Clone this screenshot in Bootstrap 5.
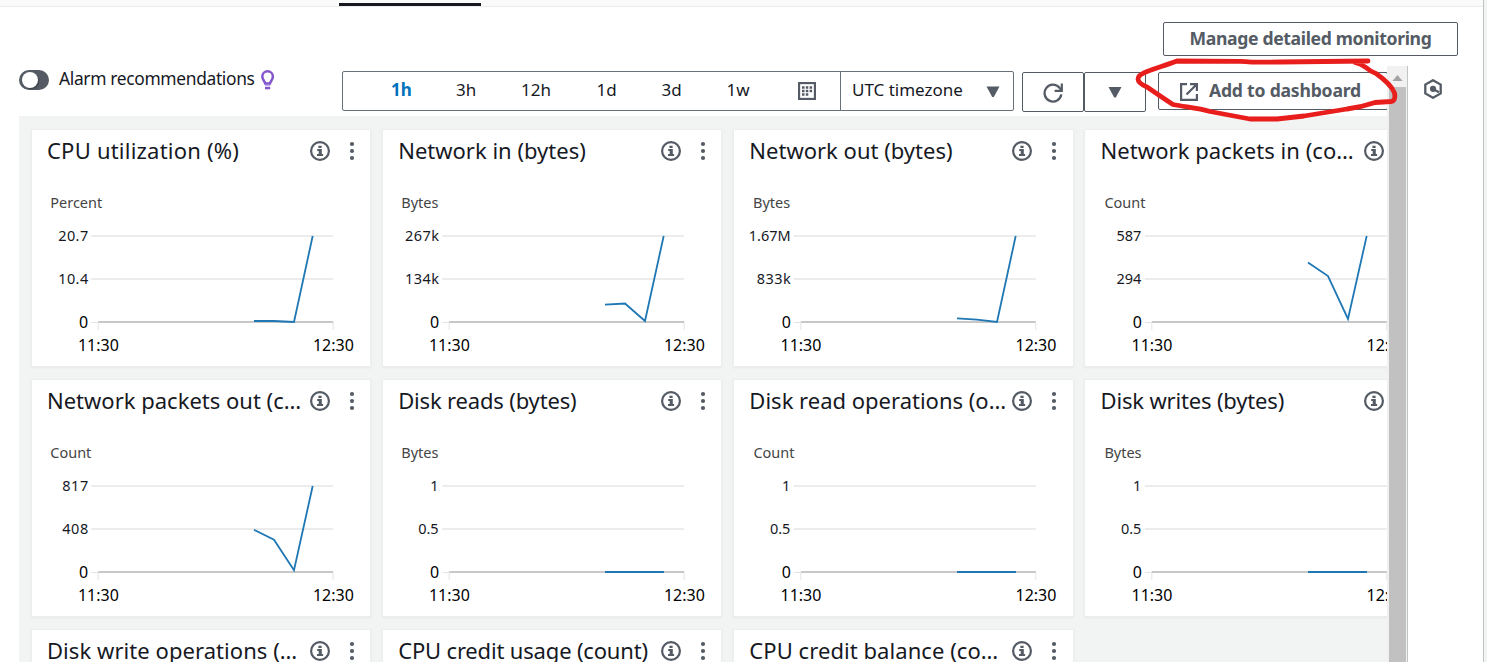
<!DOCTYPE html>
<html lang="en">
<head>
<meta charset="utf-8">
<meta name="viewport" content="width=device-width, initial-scale=1">
<title>Monitoring</title>
<link rel="stylesheet" href="https://cdn.jsdelivr.net/npm/bootstrap@5.3.0/dist/css/bootstrap.min.css">
<style>
  body { font-family: "Noto Sans", "Open Sans", sans-serif; color: #16191f; height: 662px; overflow: hidden; background: #f2f3f3; }
  .page { width: 1484px; height: 662px; border-right: 1px solid #bfc5c6; overflow: hidden; }
  .tabstrip { height: 7px; background: #fafafa; border-bottom: 1px solid #eaeded; padding: 3px 0 0 339px; }
  .tab-mark { width: 142px; height: 3px; background: #16191f; }
  .actions { height: 59px; padding: 15px 25px 0 0; }
  .btn-line { --bs-btn-color: #545b64; --bs-btn-border-color: #545b64; --bs-btn-border-radius: 2px; --bs-btn-font-weight: 700; --bs-btn-font-size: 17.6px; --bs-btn-line-height: 20px; --bs-btn-padding-x: 0; --bs-btn-padding-y: 0; background: #fff; white-space: nowrap; flex: none; }
  .btn-manage { width: 295px; height: 34px; letter-spacing: -.35px; padding-bottom: 3px; }
  .btn-add span { letter-spacing: -.22px; padding-bottom: 2px; }
  .pane { width: 1368px; margin-left: 19px; height: 596px; overflow: hidden; }
  .toolbar { height: 50px; width: 1368px; }
  .switch { width: 30px; height: 20px; border-radius: 10px; background: #545b64; padding: 2px 3px; margin-top: 4px; flex: none; }
  .knob { width: 16px; height: 16px; border-radius: 50%; background: #fff; box-shadow: 1px 1px 1px rgba(0,0,0,.3); }
  .alarm-label { font-size: 17.4px; letter-spacing: -.34px; line-height: 24px; margin: 0 0 0 10px; width: 196px; flex: none; white-space: nowrap; }
  .bulb { margin: 4px 0 0 4px; flex: none; }
  .range-box { margin: 5px 0 0 65px; height: 40px; width: 499px; flex: none; border: 1px solid #687078; border-radius: 2px 0 0 2px; padding-left: 48px; }
  .range-box span { font-size: 17px; line-height: 36px; flex: none; white-space: nowrap; width: 65px; }
  .range-box .wide { width: 75.5px; }
  .calendar { margin: 10px 24px 0 auto; }
  .zone-box { margin: 5px 0 0 -1px; height: 40px; width: 174px; flex: none; border: 1px solid #687078; border-radius: 0 2px 2px 0; font-size: 17px; line-height: 36px; padding-left: 11px; }
  .btn-refresh, .btn-caret { width: 62px; height: 40px; margin-top: 6px; }
  .btn-refresh { margin-left: 8px; }
  .btn-caret svg { display: block; margin: 0 auto; }
  .btn-add { width: 230px; height: 38px; margin: 6px 0 0 12px; }
  .active-range { color: #0073bb; font-weight: 700; }
  .board { background: #f2f3f3; width: 1420px; height: 546px; display: grid; grid-template-columns: repeat(4, 338.4px); grid-auto-rows: 236px; gap: 14px 12.8px; padding: 14px 0 0 12.8px; }
  .metric { --bs-card-border-width: 0; --bs-card-border-radius: 0; background: #fff; box-shadow: 0 0 0 1px #eceeee, 0 1px 2px 1px #e6e8e8; }
  .metric-head { height: 46px; padding: 4px 0 0 15.2px; flex: none; }
  .metric-title { width: 260px; font-size: 22px; line-height: 32px; white-space: nowrap; color: #16191f; }
  .snug { letter-spacing: -.17px; }
  .open-a { letter-spacing: .22px; }
  .open-b { letter-spacing: .06px; }
  .info-icon { width: 20px; height: 20px; margin: 7px 0 0 3px; flex: none; }
  .menu-icon { width: 6px; height: 20px; margin: 7px 0 0 19px; flex: none; }
  .chart { width: 338.4px; height: 190px; display: block; }
  .chart text { font-size: 14.5px; fill: #16191f; }
  .chart .unit { fill: #444; }
  .end { text-anchor: end; } .mid { text-anchor: middle; }
  .series { fill: none; stroke: #1f77b4; stroke-width: 1.8; }
  .scroller { width: 21px; height: 596px; border-right: 1px solid #bfc5c6; background: #f1f1f1; }
  .scroll-up { height: 21px; padding: 9px 0 0 5px; }
  .thumb { margin-left: 2px; width: 17px; height: 575px; background: #c1c1c1; }
  .side-icon { margin: 13px 0 0 15px; }
  .marker { left: 0; top: 0; pointer-events: none; }
</style>
</head>
<body>
<svg class="d-none" xmlns="http://www.w3.org/2000/svg">
  <symbol id="info" viewBox="0 0 20 20"><circle cx="10" cy="10" r="8.9" fill="none" stroke="#545b64" stroke-width="2.200"/><path d="M8.4 4.700h3.200v2.300H8.400zM7.200 8.100h4.600v5h1.300v2H7v-2h1.700v-3.100H7.200z" fill="#545b64"/></symbol>
  <symbol id="dots" viewBox="0 0 6 20"><g fill="#545b64"><circle cx="3" cy="3" r="2.100"/><circle cx="3" cy="10" r="2.100"/><circle cx="3" cy="17" r="2.100"/></g></symbol>
  <g id="axes"><path d="M59.200 106h242M59.200 149h242" stroke="#ececec" stroke-width="2"/><path d="M59.200 192.500h7M66.200 193v7M301.200 193v7" stroke="#e4e4e4"/><path d="M66.200 192h235" stroke="#c8c8c8" stroke-width="2"/><text class="end" x="56.2" y="198">0</text><text class="mid" x="66.4" y="221">11:30</text><text class="mid" x="301.4" y="221">12:30</text></g>
</svg>

<div class="page bg-white">
  <div class="tabstrip"><div class="tab-mark"></div></div>
  <div class="actions d-flex justify-content-end"><button class="btn btn-line btn-manage">Manage detailed monitoring</button></div>
  <div class="d-flex">
    <main class="pane flex-shrink-0">
      <div class="toolbar d-flex align-items-start">
        <div class="switch"><div class="knob"></div></div>
        <div class="alarm-label">Alarm recommendations</div>
        <svg class="bulb" width="18" height="20" viewBox="0 0 18 20"><path d="M6.200 13.400C6 11.700 3.300 10 3.300 6.600a5.300 5.300 0 0 1 10.600 0c0 3.400-2.700 5.100-2.900 6.800z" fill="none" stroke="#8456ce" stroke-width="2.500"/><path d="M6 15h5.200v1.400H6z" fill="#bda4e6"/><path d="M6 17h5.200v2.300H6z" fill="#8456ce"/></svg>
        <div class="range-box d-flex">
          <span class="active-range">1h</span><span>3h</span><span class="wide">12h</span><span>1d</span><span>3d</span><span class="w-auto">1w</span>
          <svg class="calendar" width="18" height="18" viewBox="0 0 18 18"><rect x="1" y="1" width="16" height="16" fill="none" stroke="#545b64" stroke-width="2.300"/><path d="M4 5.500h10.500M4 9h10.500M4 12.500h7" stroke="#545b64" stroke-width="2.300" stroke-dasharray="2.500 1.300"/></svg>
        </div>
        <div class="zone-box d-flex"><span>UTC timezone</span><svg style="margin:14px 0 0 auto" class="me-2" width="24" height="12"><path d="M5.500 .500h13L12.800 11h-1.600z" fill="#545b64"/></svg></div>
        <button class="btn btn-line btn-refresh"><svg width="20" height="20" viewBox="0 0 20 20"><path d="M18.300 11.300A8.400 8.400 0 1 1 16.500 4.800L18.500 7" fill="none" stroke="#545b64" stroke-width="2.300"/><path d="M18.800 .500v7.300h-7.200" fill="none" stroke="#545b64" stroke-width="2.200"/></svg></button>
        <button class="btn btn-line btn-caret"><svg width="14" height="11"><path d="M.500 0h13L7.800 10.500H6.200z" fill="#545b64"/></svg></button>
        <button class="btn btn-line btn-add d-flex align-items-center"><svg style="margin:2px 11px 0 21px" width="18" height="18" viewBox="0 0 18 18" fill="none" stroke="#545b64" stroke-width="2.200"><path d="M7 1.100H1.100v15.800h15.800V11M10 1.100h6.900V8M16.500 1.500L6.500 11.500"/></svg><span>Add to dashboard</span></button>
      </div>

      <div class="board">
        <section class="card metric"><div class="metric-head d-flex"><h2 class="metric-title open-a m-0 fw-normal">CPU utilization (%)</h2><svg class="info-icon"><use href="#info"/></svg><svg class="menu-icon"><use href="#dots"/></svg></div>
          <svg class="chart" viewBox="0 46 338.4 190"><use href="#axes"/><text class="unit" x="18.3" y="78">Percent</text><text class="end" x="56.2" y="111" textLength="30">20.7</text><text class="end" x="56.2" y="154" textLength="30">10.4</text><path class="series" d="M222 191h20l20 1 18.700-86"/></svg></section>
        <section class="card metric"><div class="metric-head d-flex"><h2 class="metric-title m-0 fw-normal">Network in (bytes)</h2><svg class="info-icon"><use href="#info"/></svg><svg class="menu-icon"><use href="#dots"/></svg></div>
          <svg class="chart" viewBox="0 46 338.4 190"><use href="#axes"/><text class="unit" x="18.3" y="78">Bytes</text><text class="end" x="56" y="111" textLength="34">267k</text><text class="end" x="56" y="154" textLength="34">134k</text><path class="series" d="M222 174.700l20-1.200 20 17.500 18.700-85"/></svg></section>
        <section class="card metric"><div class="metric-head d-flex"><h2 class="metric-title m-0 fw-normal">Network out (bytes)</h2><svg class="info-icon"><use href="#info"/></svg><svg class="menu-icon"><use href="#dots"/></svg></div>
          <svg class="chart" viewBox="0 46 338.4 190"><use href="#axes" x=".6"/><text class="unit" x="19" y="78">Bytes</text><text class="end" x="56.7" y="111">1.67M</text><text class="end" x="56.7" y="154" textLength="34">833k</text><path class="series" d="M223 188.400l20 1.300 20 2.300 18.700-86"/></svg></section>
        <section class="card metric"><div class="metric-head d-flex"><h2 class="metric-title open-b m-0 fw-normal">Network packets in (co…</h2><svg class="info-icon"><use href="#info"/></svg></div>
          <svg class="chart" viewBox="0 46 338.4 190"><use href="#axes" x=".6"/><text class="unit" x="19.4" y="78">Count</text><text class="end" x="56.4" y="111">587</text><text class="end" x="56.4" y="154">294</text><path class="series" d="M223 132.500l20 13.500 20 43 18.700-83"/></svg></section>

        <section class="card metric"><div class="metric-head d-flex"><h2 class="metric-title m-0 fw-normal">Network packets out (c…</h2><svg class="info-icon"><use href="#info"/></svg><svg class="menu-icon"><use href="#dots"/></svg></div>
          <svg class="chart" viewBox="0 46 338.4 190"><use href="#axes"/><text class="unit" x="18.3" y="78">Count</text><text class="end" x="56.2" y="111" textLength="26">817</text><text class="end" x="56.2" y="154" textLength="26">408</text><path class="series" d="M222 149.700l20 10 20 30.500 18.700-84.200"/></svg></section>
        <section class="card metric"><div class="metric-head d-flex"><h2 class="metric-title snug m-0 fw-normal">Disk reads (bytes)</h2><svg class="info-icon"><use href="#info"/></svg><svg class="menu-icon"><use href="#dots"/></svg></div>
          <svg class="chart" viewBox="0 46 338.4 190"><use href="#axes"/><text class="unit" x="18.3" y="78">Bytes</text><text class="end" x="55.5" y="111">1</text><text class="end" x="55.6" y="154">0.5</text><path class="series" d="M222 192h59"/></svg></section>
        <section class="card metric"><div class="metric-head d-flex"><h2 class="metric-title m-0 fw-normal">Disk read operations (o…</h2><svg class="info-icon"><use href="#info"/></svg><svg class="menu-icon"><use href="#dots"/></svg></div>
          <svg class="chart" viewBox="0 46 338.4 190"><use href="#axes" x=".6"/><text class="unit" x="19.4" y="78">Count</text><text class="end" x="56.4" y="111">1</text><text class="end" x="56.4" y="154">0.5</text><path class="series" d="M223 192h59"/></svg></section>
        <section class="card metric"><div class="metric-head d-flex"><h2 class="metric-title snug m-0 fw-normal">Disk writes (bytes)</h2><svg class="info-icon"><use href="#info"/></svg></div>
          <svg class="chart" viewBox="0 46 338.4 190"><use href="#axes" x=".6"/><text class="unit" x="19.4" y="78">Bytes</text><text class="end" x="56.4" y="111">1</text><text class="end" x="56.4" y="154">0.5</text><path class="series" d="M223 192h59"/></svg></section>

        <section class="card metric"><div class="metric-head d-flex"><h2 class="metric-title open-b m-0 fw-normal">Disk write operations (…</h2><svg class="info-icon"><use href="#info"/></svg><svg class="menu-icon"><use href="#dots"/></svg></div></section>
        <section class="card metric"><div class="metric-head d-flex"><h2 class="metric-title snug m-0 fw-normal">CPU credit usage (count)</h2><svg class="info-icon"><use href="#info"/></svg><svg class="menu-icon"><use href="#dots"/></svg></div></section>
        <section class="card metric"><div class="metric-head d-flex"><h2 class="metric-title open-b m-0 fw-normal">CPU credit balance (co…</h2><svg class="info-icon"><use href="#info"/></svg><svg class="menu-icon"><use href="#dots"/></svg></div></section>
      </div>
    </main>
    <div class="scroller flex-shrink-0"><div class="scroll-up d-flex"><svg width="11" height="6"><path d="M5.500 0L10.500 6H.500z" fill="#a3a3a3"/></svg></div><div class="thumb"></div></div>
    <svg class="side-icon" width="20" height="20" viewBox="0 0 20 20"><path d="M10 1.200l7.700 4.400v8.800L10 18.800l-7.700-4.400V5.600z" fill="none" stroke="#545b64" stroke-width="2.300"/><circle cx="10" cy="9.800" r="3.100" fill="#545b64"/><path d="M10 10l6 3.300" stroke="#545b64" stroke-width="2.300"/></svg>
  </div>
</div>

<!-- hand-drawn highlight around the "Add to dashboard" button -->
<svg class="marker position-absolute" width="1487" height="662"><path d="M1368 61L1280 62Q1255 62.500 1240 61.300L1177 61C1164 66 1155 68 1147 71.500C1135 76 1135 82 1147 87Q1163 98 1173 104.500C1185 107 1198 108 1210 111.500L1250 119L1277 119L1304 116L1347 109Q1362 107 1375 102.500L1391 101.500Q1396 101 1394.500 93Q1391 84 1376 73.500Q1371 72 1366 67.500Q1361 64 1355 62.500" fill="none" stroke="#e81e1c" stroke-width="4.800" stroke-linecap="round" stroke-linejoin="round"/></svg>
<script src="https://cdn.jsdelivr.net/npm/bootstrap@5.3.0/dist/js/bootstrap.bundle.min.js"></script>
</body>
</html>
